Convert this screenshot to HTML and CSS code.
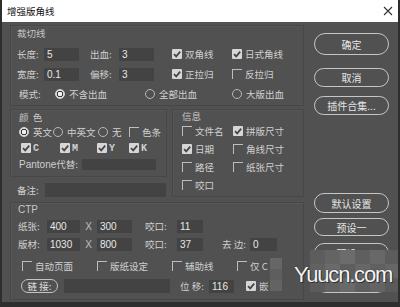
FILE: index.html
```html
<!DOCTYPE html>
<html lang="zh">
<head>
    <meta charset="UTF-8">
    <title>增强版角线</title>
    <link rel="stylesheet" href="styles.css">
</head>
<body>
    <div class="win">
        <div class="titlebar">
            <span class="title">增强版角线</span>
            <svg class="close" width="10" height="10" viewBox="0 0 10 10"><path d="M1 1L9 9M9 1L1 9" stroke="#333" stroke-width="1.1"/></svg>
        </div>

        <div class="main">
            <div class="left">
                <!-- 裁切线 -->
                <div class="group g-cut">
                    <div class="legend">裁切线</div>
                    <div class="row">
                        <span class="lbl w27">长度:</span><span class="inp w35">5</span>
                        <span class="lbl w29 ml11">出血:</span><span class="inp w35">3</span>
                        <span class="opt w60 ml18"><i class="cb on"><svg viewBox="0 0 10 10"><path d="M2 5.2L4.2 7.4L8.2 2.6" stroke="#444" stroke-width="1.7" fill="none"/></svg></i>双角线</span>
                        <span class="opt"><i class="cb on"><svg viewBox="0 0 10 10"><path d="M2 5.2L4.2 7.4L8.2 2.6" stroke="#444" stroke-width="1.7" fill="none"/></svg></i>日式角线</span>
                    </div>
                    <div class="row">
                        <span class="lbl w27">宽度:</span><span class="inp w35">0.1</span>
                        <span class="lbl w29 ml11">偏移:</span><span class="inp w35">3</span>
                        <span class="opt w60 ml18"><i class="cb on"><svg viewBox="0 0 10 10"><path d="M2 5.2L4.2 7.4L8.2 2.6" stroke="#444" stroke-width="1.7" fill="none"/></svg></i>正拉归</span>
                        <span class="opt"><i class="cb"></i>反拉归</span>
                    </div>
                    <div class="row">
                        <span class="lbl w36 pl2">模式:</span>
                        <span class="opt w90"><i class="rd on"></i>不含出血</span>
                        <span class="opt w87"><i class="rd"></i>全部出血</span>
                        <span class="opt"><i class="rd"></i>大版出血</span>
                    </div>
                </div>

                <div class="mid">
                    <div class="mid-left">
                        <!-- 颜色 -->
                        <div class="group g-color">
                            <div class="legend">颜&nbsp;&nbsp;色</div>
                            <div class="row r16">
                                <span class="opt w34"><i class="rd on"></i>英文</span>
                                <span class="opt w45"><i class="rd"></i>中英文</span>
                                <span class="opt w31"><i class="rd"></i>无</span>
                                <span class="opt"><i class="cb"></i>色条</span>
                            </div>
                            <div class="row r16 pl2">
                                <span class="opt w39 ink"><i class="cb on"><svg viewBox="0 0 10 10"><path d="M2 5.2L4.2 7.4L8.2 2.6" stroke="#444" stroke-width="1.7" fill="none"/></svg></i>C</span>
                                <span class="opt w37 ink"><i class="cb on"><svg viewBox="0 0 10 10"><path d="M2 5.2L4.2 7.4L8.2 2.6" stroke="#444" stroke-width="1.7" fill="none"/></svg></i>M</span>
                                <span class="opt w32 ink"><i class="cb on"><svg viewBox="0 0 10 10"><path d="M2 5.2L4.2 7.4L8.2 2.6" stroke="#444" stroke-width="1.7" fill="none"/></svg></i>Y</span>
                                <span class="opt ink"><i class="cb on"><svg viewBox="0 0 10 10"><path d="M2 5.2L4.2 7.4L8.2 2.6" stroke="#444" stroke-width="1.7" fill="none"/></svg></i>K</span>
                            </div>
                            <div class="row r16">
                                <span class="lbl w63"><span class="latin">Pantone</span>代替:</span>
                                <span class="inp w74 h11"></span>
                            </div>
                        </div>
                        <div class="row note">
                            <span class="lbl w28">备注:</span><span class="inp w121 h14"></span>
                        </div>
                    </div>

                    <!-- 信息 -->
                    <div class="group g-info">
                        <div class="legend l12">信息</div>
                        <div class="row r18">
                            <span class="opt w51"><i class="cb"></i>文件名</span>
                            <span class="opt"><i class="cb on"><svg viewBox="0 0 10 10"><path d="M2 5.2L4.2 7.4L8.2 2.6" stroke="#444" stroke-width="1.7" fill="none"/></svg></i>拼版尺寸</span>
                        </div>
                        <div class="row r18">
                            <span class="opt w51"><i class="cb on"><svg viewBox="0 0 10 10"><path d="M2 5.2L4.2 7.4L8.2 2.6" stroke="#444" stroke-width="1.7" fill="none"/></svg></i>日期</span>
                            <span class="opt"><i class="cb"></i>角线尺寸</span>
                        </div>
                        <div class="row r18">
                            <span class="opt w51"><i class="cb"></i>路径</span>
                            <span class="opt"><i class="cb"></i>纸张尺寸</span>
                        </div>
                        <div class="row r18">
                            <span class="opt w51"><i class="cb"></i>咬口</span>
                        </div>
                    </div>
                </div>

                <!-- CTP -->
                <div class="group g-ctp">
                    <div class="legend latin">CTP</div>
                    <div class="row r18">
                        <span class="lbl w29">纸张:</span><span class="inp w33">400</span>
                        <span class="x w17">X</span><span class="inp w35">300</span>
                        <span class="lbl w32 ml13">咬口:</span><span class="inp w26">11</span>
                    </div>
                    <div class="row r18">
                        <span class="lbl w29">版材:</span><span class="inp w33">1030</span>
                        <span class="x w17">X</span><span class="inp w35">800</span>
                        <span class="lbl w32 ml13">咬口:</span><span class="inp w26">37</span>
                        <span class="lbl w28 ml19">去&nbsp;边:</span><span class="inp w27">0</span>
                    </div>
                    <div class="row r18 mt4 pl4">
                        <span class="opt w75"><i class="cb"></i>自动页面</span>
                        <span class="opt w75"><i class="cb"></i>版纸设定</span>
                        <span class="opt w65"><i class="cb"></i>辅助线</span>
                        <span class="opt"><i class="cb"></i>仅 C</span>
                    </div>
                    <div class="row r18 mt2 pl3">
                        <span class="pill-sm">链&nbsp;接:</span>
                        <span class="inp w106 h14 ml6"></span>
                        <span class="lbl w29 ml10">位&nbsp;移:</span><span class="inp w25">116</span>
                        <span class="opt ml12"><i class="cb on"><svg viewBox="0 0 10 10"><path d="M2 5.2L4.2 7.4L8.2 2.6" stroke="#444" stroke-width="1.7" fill="none"/></svg></i>嵌</span>
                    </div>
                </div>
            </div>

            <div class="right">
                <div class="btn b-ok">确定</div>
                <div class="btn b-cancel">取消</div>
                <div class="btn b-plug">插件合集...</div>
                <div class="btn b-def">默认设置</div>
                <div class="btn b-p1">预设一</div>
                <div class="btn b-p2">预设二</div>
                <div class="btn b-p3"></div>
            </div>
        </div>

        <!-- watermark over the corner -->
        <div class="mosaic">
            <i style="background:#5d5d5d"></i><i style="background:#646464"></i><i style="background:#6c6c6c"></i><i style="background:#5f5f5f"></i><i style="background:#686868"></i><i style="background:#5c5c5c"></i>
            <i style="background:#616161"></i><i style="background:#6a6a6a"></i><i style="background:#5e5e5e"></i><i style="background:#676767"></i><i style="background:#606060"></i><i style="background:#666"></i>
            <i style="background:#5b5b5b"></i><i style="background:#626262"></i><i style="background:#696969"></i><i style="background:#5e5e5e"></i><i style="background:#646464"></i><i style="background:#5a5a5a"></i>
        </div>
        <div class="mosaic-sm">
            <i style="background:#666"></i><i style="background:#5e5e5e"></i><i style="background:#636363"></i>
        </div>
        <div class="wm">Yuucn.com</div>
    </div>
</body>
</html>
```

FILE: styles.css
```css
body {
    margin: 0;
    background: #2c2c2c;
}
.win {
    width: 400px;
    height: 307px;
    box-sizing: border-box;
    border: 2px solid #2e2e2e;
    border-top: 0;
    border-bottom-width: 5px;
    background: #515151;
    color: #d0d0d0;
    font-family: "Noto Sans CJK SC", "Noto Sans", sans-serif;
    font-size: 9.5px;
    display: flex;
    flex-direction: column;
    position: relative;
    overflow: hidden;
}
.titlebar {
    height: 22px;
    flex: none;
    background: #fff;
    color: #111;
    display: flex;
    align-items: center;
    justify-content: space-between;
    padding: 0 5px 0 5px;
}
.title {
    font-size: 9.5px;
}
.main {
    display: flex;
    padding: 3px 0 0 8px;
}
.left {
    width: 294px;
    flex: none;
}
.right {
    width: 75px;
    margin-left: 10px;
    display: flex;
    flex-direction: column;
}

/* group boxes */
.group {
    box-sizing: border-box;
    border: 1px solid #474747;
    box-shadow: inset 1px 1px 0 #575757;
}
.legend {
    height: 14px;
    line-height: 14px;
    color: #c8c8c8;
}
.l12 {
    height: 12px;
    line-height: 12px;
}
.g-cut {
    height: 81px;
    padding-left: 6px;
}
.g-cut .legend {
    margin-bottom: 4px;
}
.mid {
    display: flex;
    margin-top: 3px;
}
.mid-left {
    width: 157px;
}
.g-color {
    height: 68px;
    padding-left: 8px;
}
.g-info {
    width: 132px;
    height: 88px;
    margin-left: 5px;
    padding-left: 9px;
}
.g-ctp {
    height: 98px;
    margin-top: 5px;
    padding-left: 7px;
}

/* rows */
.row {
    height: 20px;
    display: flex;
    align-items: center;
    white-space: nowrap;
}
.r16 { height: 16px; }
.r18 { height: 18px; }
.note {
    height: 14px;
    margin-top: 6px;
    padding-left: 7px;
}
.lbl {
    flex: none;
}
.latin {
    font-family: "Liberation Sans", sans-serif;
    font-size: 10px;
}
.x {
    text-align: center;
    font-family: "Liberation Sans", sans-serif;
    font-size: 10px;
    color: #c0c0c0;
}
.inp {
    flex: none;
    box-sizing: border-box;
    height: 13px;
    line-height: 13px;
    background: #434343;
    color: #e8e8e8;
    padding-left: 3px;
    font-family: "Liberation Sans", sans-serif;
    font-size: 10px;
}
.h11 { height: 11px; }
.h14 { height: 14px; }

.opt {
    display: flex;
    align-items: center;
    gap: 3px;
    flex: none;
}
.ink {
    font-family: "Liberation Mono", monospace;
    font-weight: bold;
    font-size: 10px;
    gap: 2px;
}

/* check boxes and radios */
.cb {
    width: 10px;
    height: 10px;
    box-sizing: border-box;
    flex: none;
    border-top: 1px solid #bdbdbd;
    border-left: 1px solid #bdbdbd;
}
.cb.on {
    border: 0;
    background: #d6d6d6;
    border-radius: 1px;
}
.cb svg {
    display: block;
    width: 10px;
    height: 10px;
}
.rd {
    width: 10px;
    height: 10px;
    box-sizing: border-box;
    flex: none;
    border: 1px solid #b8b8b8;
    border-radius: 50%;
    margin-right: 1px;
}
.rd.on {
    background: radial-gradient(circle, #f2f2f2 0 2px, #3c3c3c 2.5px 3px, #d8d8d8 3.5px);
    border-color: #d8d8d8;
}

.pill-sm {
    box-sizing: border-box;
    width: 37px;
    height: 14px;
    line-height: 12px;
    text-align: center;
    border: 1.5px solid #c4c4c4;
    border-radius: 8px;
    color: #e0e0e0;
    flex: none;
}

/* widths */
.w17 { width: 17px; }
.w25 { width: 25px; }
.w26 { width: 26px; }
.w27 { width: 27px; }
.w28 { width: 28px; }
.w29 { width: 29px; }
.w31 { width: 31px; }
.w32 { width: 32px; }
.w33 { width: 33px; }
.w34 { width: 34px; }
.w35 { width: 35px; }
.w36 { width: 36px; }
.w37 { width: 37px; }
.w39 { width: 39px; }
.w45 { width: 45px; }
.w51 { width: 51px; }
.w60 { width: 60px; }
.w63 { width: 63px; }
.w65 { width: 65px; }
.w74 { width: 74px; }
.w75 { width: 75px; }
.w87 { width: 87px; }
.w90 { width: 90px; }
.w106 { width: 106px; }
.w121 { width: 121px; }
.ml6 { margin-left: 6px; }
.ml10 { margin-left: 10px; }
.ml11 { margin-left: 11px; }
.ml12 { margin-left: 12px; }
.ml13 { margin-left: 13px; }
.ml18 { margin-left: 18px; }
.ml19 { margin-left: 19px; }
.mt2 { margin-top: 2px; }
.mt4 { margin-top: 4px; }
.pl2 { padding-left: 2px; }
.pl3 { padding-left: 3px; }
.pl4 { padding-left: 4px; }

/* right buttons */
.btn {
    box-sizing: border-box;
    border: 1.5px solid #c6c6c6;
    border-radius: 12px;
    display: flex;
    align-items: center;
    justify-content: center;
    color: #e6e6e6;
    font-size: 10px;
}
.b-ok { height: 22px; margin-top: 8px; }
.b-cancel { height: 19px; margin-top: 13px; }
.b-plug { height: 19px; margin-top: 9px; }
.b-def { height: 20px; margin-top: 78px; }
.b-p1 { height: 18px; margin-top: 5px; }
.b-p2 { height: 20px; margin-top: 7px; }
.b-p3 { height: 24px; margin-top: 6px; }

/* watermark */
.mosaic {
    position: absolute;
    left: 308px;
    top: 250px;
    display: grid;
    grid-template-columns: repeat(6, 15px);
    grid-auto-rows: 14px;
}
.mosaic-sm {
    position: absolute;
    left: 268px;
    top: 258px;
    display: grid;
    grid-template-columns: 12px;
    grid-auto-rows: 11px;
}
.mosaic i, .mosaic-sm i {
    display: block;
}
.wm {
    position: absolute;
    left: 292px;
    top: 262px;
    font-family: "Liberation Sans", sans-serif;
    font-size: 22px;
    letter-spacing: -1.2px;
    color: #f4f4f4;
    text-shadow: 0 0 1px #222, 1px 1px 0 #333;
}
```
